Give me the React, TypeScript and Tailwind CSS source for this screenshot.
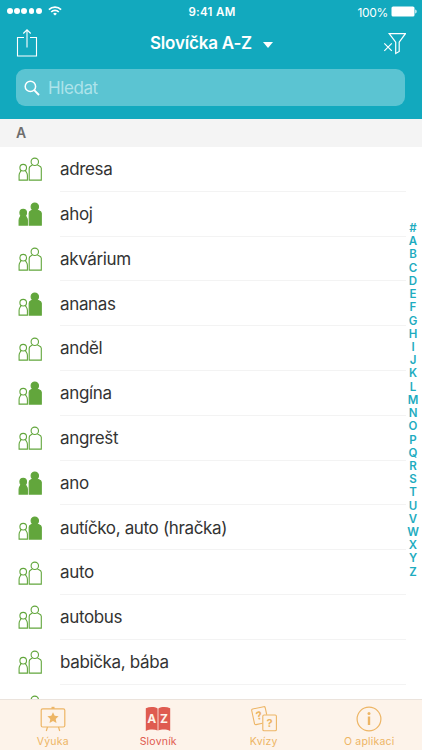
import { clsx } from "clsx"

type Level = "none" | "adult" | "both"

type Word = {
  text: string
  level: Level
}

const WORDS: Word[] = [
  { text: "adresa", level: "none" },
  { text: "ahoj", level: "both" },
  { text: "akvárium", level: "none" },
  { text: "ananas", level: "adult" },
  { text: "anděl", level: "none" },
  { text: "angína", level: "adult" },
  { text: "angrešt", level: "none" },
  { text: "ano", level: "both" },
  { text: "autíčko, auto (hračka)", level: "adult" },
  { text: "auto", level: "none" },
  { text: "autobus", level: "none" },
  { text: "babička, bába", level: "none" },
  { text: "bagr na hraní, plastový", level: "none" },
]

const INDEX_LETTERS = "#ABCDEFGHIJKLMNOPQRSTUVWXYZ".split("")

const TABS = [
  { name: "Výuka", icon: BoardIcon, active: false },
  { name: "Slovník", icon: DictionaryIcon, active: true },
  { name: "Kvízy", icon: QuizIcon, active: false },
  { name: "O aplikaci", icon: InfoIcon, active: false },
]

export default function App() {
  return (
    <div className="relative flex h-[750px] w-[422px] flex-col overflow-hidden bg-white font-['Inter',sans-serif]">
      <header className="h-[119px] shrink-0 bg-[#12a9be] text-white">
        <StatusBar />
        <NavBar />
        <SearchField />
      </header>

      <main className="min-h-0 flex-1 overflow-hidden">
        <h2 className="flex h-7 items-center bg-[#f4f4f4] pb-px pl-4 text-[14px] font-semibold text-[#6e6e6e]">A</h2>
        <ul>
          {WORDS.map((word) => (
            <WordRow key={word.text} word={word} />
          ))}
        </ul>
      </main>

      <IndexBar />
      <TabBar />
    </div>
  )
}

function StatusBar() {
  return (
    <div className="grid h-[22px] grid-cols-3 items-center pl-[7px] pr-[5px]">
      <div className="flex items-center gap-[6px]">
        <div className="flex gap-[1.3px]">
          {[1, 2, 3, 4, 5].map((dot) => (
            <span key={dot} className="size-[5.9px] rounded-full bg-white" />
          ))}
        </div>
        <svg viewBox="0 0 14 10" className="h-[10px] w-[14px]" fill="none" stroke="currentColor" strokeWidth="1.7">
          <path d="M.9 3.6a8.6 8.6 0 0 1 12.2 0" />
          <path d="M3.2 6a5.4 5.4 0 0 1 7.6 0" />
          <path d="M7 9.6 5.1 7.7a2.7 2.7 0 0 1 3.8 0Z" fill="currentColor" stroke="none" />
        </svg>
      </div>
      <span className="pt-[3px] text-center text-[11.5px] font-semibold tracking-[0.3px]">9:41 AM</span>
      <div className="flex items-center justify-end gap-[3px]">
        <span className="pt-[3px] text-[12px] tracking-[-0.3px]">100%</span>
        <svg viewBox="0 0 26 11" className="h-[11px] w-[26px]" fill="currentColor">
          <rect x=".5" y=".5" width="23" height="10" rx="1.6" />
          <path d="M24.3 3.5c1.7.5 1.7 3.5 0 4Z" />
        </svg>
      </div>
    </div>
  )
}

function NavBar() {
  return (
    <div className="mb-[4px] flex h-[43px] items-center justify-between pl-4 pr-4">
      <button type="button" aria-label="Sdílet">
        <svg viewBox="0 0 22 30" className="h-[30px] w-[22px]" fill="none" stroke="currentColor" strokeWidth="1.1">
          <path d="M8 8.500H1.500V27h19V8.500H14" />
          <path d="M11 18.500V1M7.300 4.500 11 .8l3.700 3.700" />
        </svg>
      </button>
      <button type="button" className="ml-[3px] flex items-center gap-[11px] text-[17px] font-semibold tracking-[-0.2px]">
        Slovíčka A-Z
        <svg viewBox="0 0 10 6" className="mt-[2px] h-[6px] w-[10px]" fill="currentColor">
          <path d="M0 0h10L5 6Z" />
        </svg>
      </button>
      <button type="button" aria-label="Zrušit filtr">
        <svg viewBox="0 0 24 24" className="h-6 w-6" fill="none" stroke="currentColor" strokeWidth="1.2">
          <path d="M7.200 1.700h16.200l-6.200 8.400v9.400l-3.500 2V10.100Z" />
          <path d="m2.300 11.400 7.500 7.500m0-7.500-7.500 7.500" />
        </svg>
      </button>
    </div>
  )
}

function SearchField() {
  return (
    <div className="ml-4 mr-[17px] flex h-[37px] items-center gap-[8px] rounded-[9px] bg-[#5bc4d2] pl-[8px]">
      <svg viewBox="0 0 16 16" className="size-4" fill="none" stroke="currentColor" strokeWidth="1.5">
        <circle cx="6.400" cy="6.400" r="5.200" />
        <path d="m10.200 10.200 4.800 4.800" strokeWidth="1.9" />
      </svg>
      <span className="pt-[2px] text-[17px] tracking-[-0.4px] text-[#aee3ea]">Hledat</span>
    </div>
  )
}

function WordRow({ word }: { word: Word }) {
  return (
    <li className="flex h-[44.8px] pl-[18px] pr-4">
      <div className="flex w-[42px] items-center">
        <PeopleIcon level={word.level} />
      </div>
      <div className="flex flex-1 items-center whitespace-nowrap border-b border-[#f3f3f3] pt-[2px] text-[17px] tracking-[-0.35px] text-[#333]">
        {word.text}
      </div>
    </li>
  )
}

function PeopleIcon({ level }: { level: Level }) {
  return (
    <svg viewBox="0 0 24 24" className="size-6" fill="none" stroke="#62a63c" strokeWidth="1.1">
      <g fill={level === "both" ? "#62a63c" : "none"}>
        <circle cx="5.200" cy="10.700" r="3.300" />
        <path d="M3 13.500C2.600 15 1.100 15.700 1.100 18.200V23.100h8.300v-4.900c0-2.500-1.600-3.200-2-4.700" />
      </g>
      <g fill={level === "none" ? "none" : "#62a63c"}>
        <circle cx="16.800" cy="4.800" r="3.700" />
        <path d="M14.200 7.800c-.3 1.200-3 .8-3 3.500v11.800h12.100V11.300c0-2.700-3.400-2.300-3.700-3.500" />
      </g>
    </svg>
  )
}

function IndexBar() {
  return (
    <div className="absolute right-[1px] top-[222px] flex w-4 flex-col items-center text-[11.5px] font-semibold text-[#1eacc0]">
      {INDEX_LETTERS.map((letter) => (
        <span key={letter} className="h-[13.22px] leading-[13.22px]">
          {letter}
        </span>
      ))}
    </div>
  )
}

function TabBar() {
  return (
    <nav className="grid h-[51px] shrink-0 grid-cols-4 border-t border-[#ebe3dc] bg-[#fdf3ea]">
      {TABS.map((tab) => (
        <button
          key={tab.name}
          type="button"
          className={clsx(
            "flex flex-col items-center gap-[2px] pt-[6px] text-[10.5px] tracking-[0.2px]",
            tab.active ? "text-[#df5b50]" : "text-[#edb565]",
          )}
        >
          <tab.icon />
          <span className="leading-[15px]">{tab.name}</span>
        </button>
      ))}
    </nav>
  )
}

function BoardIcon() {
  return (
    <svg viewBox="0 0 26 26" className="size-[26px]" fill="none" stroke="currentColor" strokeWidth="1.2">
      <rect x="1.200" y="2.800" width="23.600" height="18.200" rx="1.500" />
      <path d="M7.500 21 6.300 25M18.500 21l1.200 4" />
      <path d="M11.500.8h3v2h-3Z" fill="currentColor" stroke="none" />
      <path
        d="m13 6.300 1.700 3.500 3.900.5-2.900 2.700.8 3.900-3.500-1.900-3.500 1.900.8-3.900-2.900-2.700 3.900-.5Z"
        fill="currentColor"
        stroke="none"
      />
    </svg>
  )
}

function DictionaryIcon() {
  return (
    <svg viewBox="0 0 26 26" className="size-[26px]">
      <path
        d="M.8 2.200C4.500.8 9.500.6 12.600 2.600v22C9.500 23.200 4.500 23.200.8 25ZM25.200 2.200C21.500.8 16.500.6 13.400 2.600v22c3-1.400 8-1.400 11.800.4Z"
        fill="currentColor"
      />
      <g fill="#fdf3ea" fontSize="12" fontWeight="700" textAnchor="middle" letterSpacing="0">
        <text x="6.700" y="17">A</text>
        <text x="19" y="17">Z</text>
      </g>
    </svg>
  )
}

function QuizIcon() {
  return (
    <svg viewBox="0 0 26 26" className="size-[26px]" fill="none" stroke="currentColor" strokeWidth="1.100">
      <path d="M11.500 17.300 5 18.600a1.300 1.300 0 0 1-1.500-1L.7 4.500a1.300 1.300 0 0 1 1-1.500l11-2.300a1.300 1.300 0 0 1 1.500 1l1.500 7" />
      <rect x="11.800" y="9" width="13.600" height="15.800" rx="1.300" />
      <g fill="currentColor" stroke="none" fontSize="11" fontWeight="700" textAnchor="middle" letterSpacing="0">
        <text x="8" y="13.500" transform="rotate(-12 8 10)">?</text>
        <text x="18.600" y="20.900">?</text>
      </g>
    </svg>
  )
}

function InfoIcon() {
  return (
    <svg viewBox="0 0 26 26" className="size-[26px]" fill="none" stroke="currentColor" strokeWidth="1.200">
      <circle cx="13" cy="13" r="11.900" />
      <path d="M13 10.500v8.500" strokeWidth="2.400" />
      <circle cx="13" cy="7.600" r="1.500" fill="currentColor" stroke="none" />
    </svg>
  )
}
